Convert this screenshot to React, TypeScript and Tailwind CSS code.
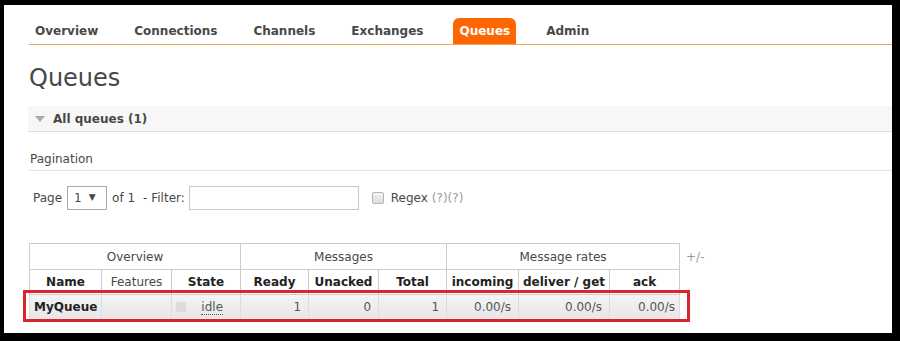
import React from 'react';

const tabs = ['Overview', 'Connections', 'Channels', 'Exchanges', 'Queues', 'Admin'];

const font = { fontFamily: '"DejaVu Sans", Verdana, sans-serif' };

function NavTabs() {
  return (
    <div className="flex items-end h-[40px] ml-[25px] border-b border-[#eda55a]">
      {tabs.map((t) => (
        <div
          key={t}
          className={
            t === 'Queues'
              ? 'mr-[24px] h-[26px] px-[6px] flex items-center rounded-t-[6px] bg-[#ff6600] text-white text-[12px] font-bold'
              : 'mr-[24px] h-[26px] px-[6px] flex items-center text-[#484848] text-[12px] font-bold'
          }
        >
          {t}
        </div>
      ))}
    </div>
  );
}

export default function App() {
  return (
    <div className="w-[900px] h-[341px] bg-black pt-[5px] pl-[4px] pr-[8px] pb-[8px]" style={font}>
      <div className="w-full h-full bg-white overflow-hidden relative">
        <NavTabs />

        <h1 className="ml-[25px] mt-[18px] text-[24px] leading-[30px] text-[#484848] font-normal">Queues</h1>

        <div className="ml-[24px] mt-[13px] h-[26px] bg-[#f7f7f7] border-b border-[#dddddd] flex items-center">
          <span className="ml-[7px] mr-[8px] w-0 h-0 border-l-[5px] border-r-[5px] border-t-[6px] border-l-transparent border-r-transparent border-t-[#aaaaaa]" />
          <span className="text-[12px] font-bold text-[#484848]">All queues (1)</span>
        </div>

        <div className="ml-[25px] mt-[19px] h-[20px] border-b border-[#e4e4e4] text-[12px] text-[#484848] leading-[16px] pl-[1px]">
          Pagination
        </div>

        <div className="ml-[29px] mt-[15px] flex items-center text-[12px] text-[#484848] h-[24px]">
          <span>Page</span>
          <div className="ml-[5px] w-[40px] h-[24px] border border-[#aaaaaa] flex items-center pl-[6px] gap-[7px] bg-white">
            <span>1</span>
            <span className="text-[9px]">▼</span>
          </div>
          <span className="ml-[5px]">of 1</span>
          <span className="ml-[8px]">- Filter:</span>
          <div className="ml-[4px] w-[170px] h-[24px] border border-[#c8c8c8] bg-white" />
          <div className="ml-[13px] w-[12px] h-[12px] rounded-[2px] border border-[#b5b5b5] bg-gradient-to-b from-[#f4f4f4] to-[#dcdcdc]" />
          <span className="ml-[7px]">Regex</span>
          <span className="ml-[4px] text-[#999999]">(?)(?)</span>
        </div>

        <div className="relative ml-[25px] mt-[33px] flex items-start">
          <table className="table-fixed border-collapse text-[12px] w-[650px]">
            <colgroup>
              <col className="w-[72px]" />
              <col className="w-[70px]" />
              <col className="w-[69px]" />
              <col className="w-[68px]" />
              <col className="w-[70px]" />
              <col className="w-[68px]" />
              <col className="w-[72px]" />
              <col className="w-[91px]" />
              <col className="w-[70px]" />
            </colgroup>
            <thead>
              <tr className="h-[26px] text-[#484848]">
                <th colSpan={3} className="border border-[#cccccc] font-normal">Overview</th>
                <th colSpan={3} className="border border-[#cccccc] font-normal">Messages</th>
                <th colSpan={3} className="border border-[#cccccc] font-normal">Message rates</th>
              </tr>
              <tr className="h-[25px] text-[#222222]">
                <th className="border border-[#cccccc] font-bold">Name</th>
                <th className="border border-[#cccccc] font-normal text-[#484848]">Features</th>
                <th className="border border-[#cccccc] font-bold">State</th>
                <th className="border border-[#cccccc] font-bold">Ready</th>
                <th className="border border-[#cccccc] font-bold">Unacked</th>
                <th className="border border-[#cccccc] font-bold">Total</th>
                <th className="border border-[#cccccc] font-bold">incoming</th>
                <th className="border border-[#cccccc] font-bold">deliver / get</th>
                <th className="border border-[#cccccc] font-bold">ack</th>
              </tr>
            </thead>
            <tbody>
              <tr className="h-[25px] bg-gradient-to-b from-[#f4f4f4] to-[#e6e6e6] text-[#555555]">
                <td className="border border-[#dddddd] pl-[4px] font-bold text-[#222222]">MyQueue</td>
                <td className="border border-[#dddddd]" />
                <td className="border border-[#dddddd] px-[4px]">
                  <div className="flex items-center justify-between">
                    <span className="w-[10px] h-[10px] bg-[#dcdcdc]" />
                    <span className="border-b border-dotted border-[#555555] leading-[14px] mr-[13px]">idle</span>
                  </div>
                </td>
                <td className="border border-[#dddddd] text-right pr-[7px]">1</td>
                <td className="border border-[#dddddd] text-right pr-[7px]">0</td>
                <td className="border border-[#dddddd] text-right pr-[7px]">1</td>
                <td className="border border-[#dddddd] text-right pr-[7px]">0.00/s</td>
                <td className="border border-[#dddddd] text-right pr-[7px]">0.00/s</td>
                <td className="border border-[#dddddd] text-right pr-[4px]">0.00/s</td>
              </tr>
            </tbody>
          </table>
          <span className="ml-[6px] mt-[5px] text-[12px] text-[#999999]">+/-</span>
          <div className="absolute left-[-6px] top-[47px] w-[667px] h-[32px] border-[3px] border-[#d8262f]" />
        </div>
      </div>
    </div>
  );
}
